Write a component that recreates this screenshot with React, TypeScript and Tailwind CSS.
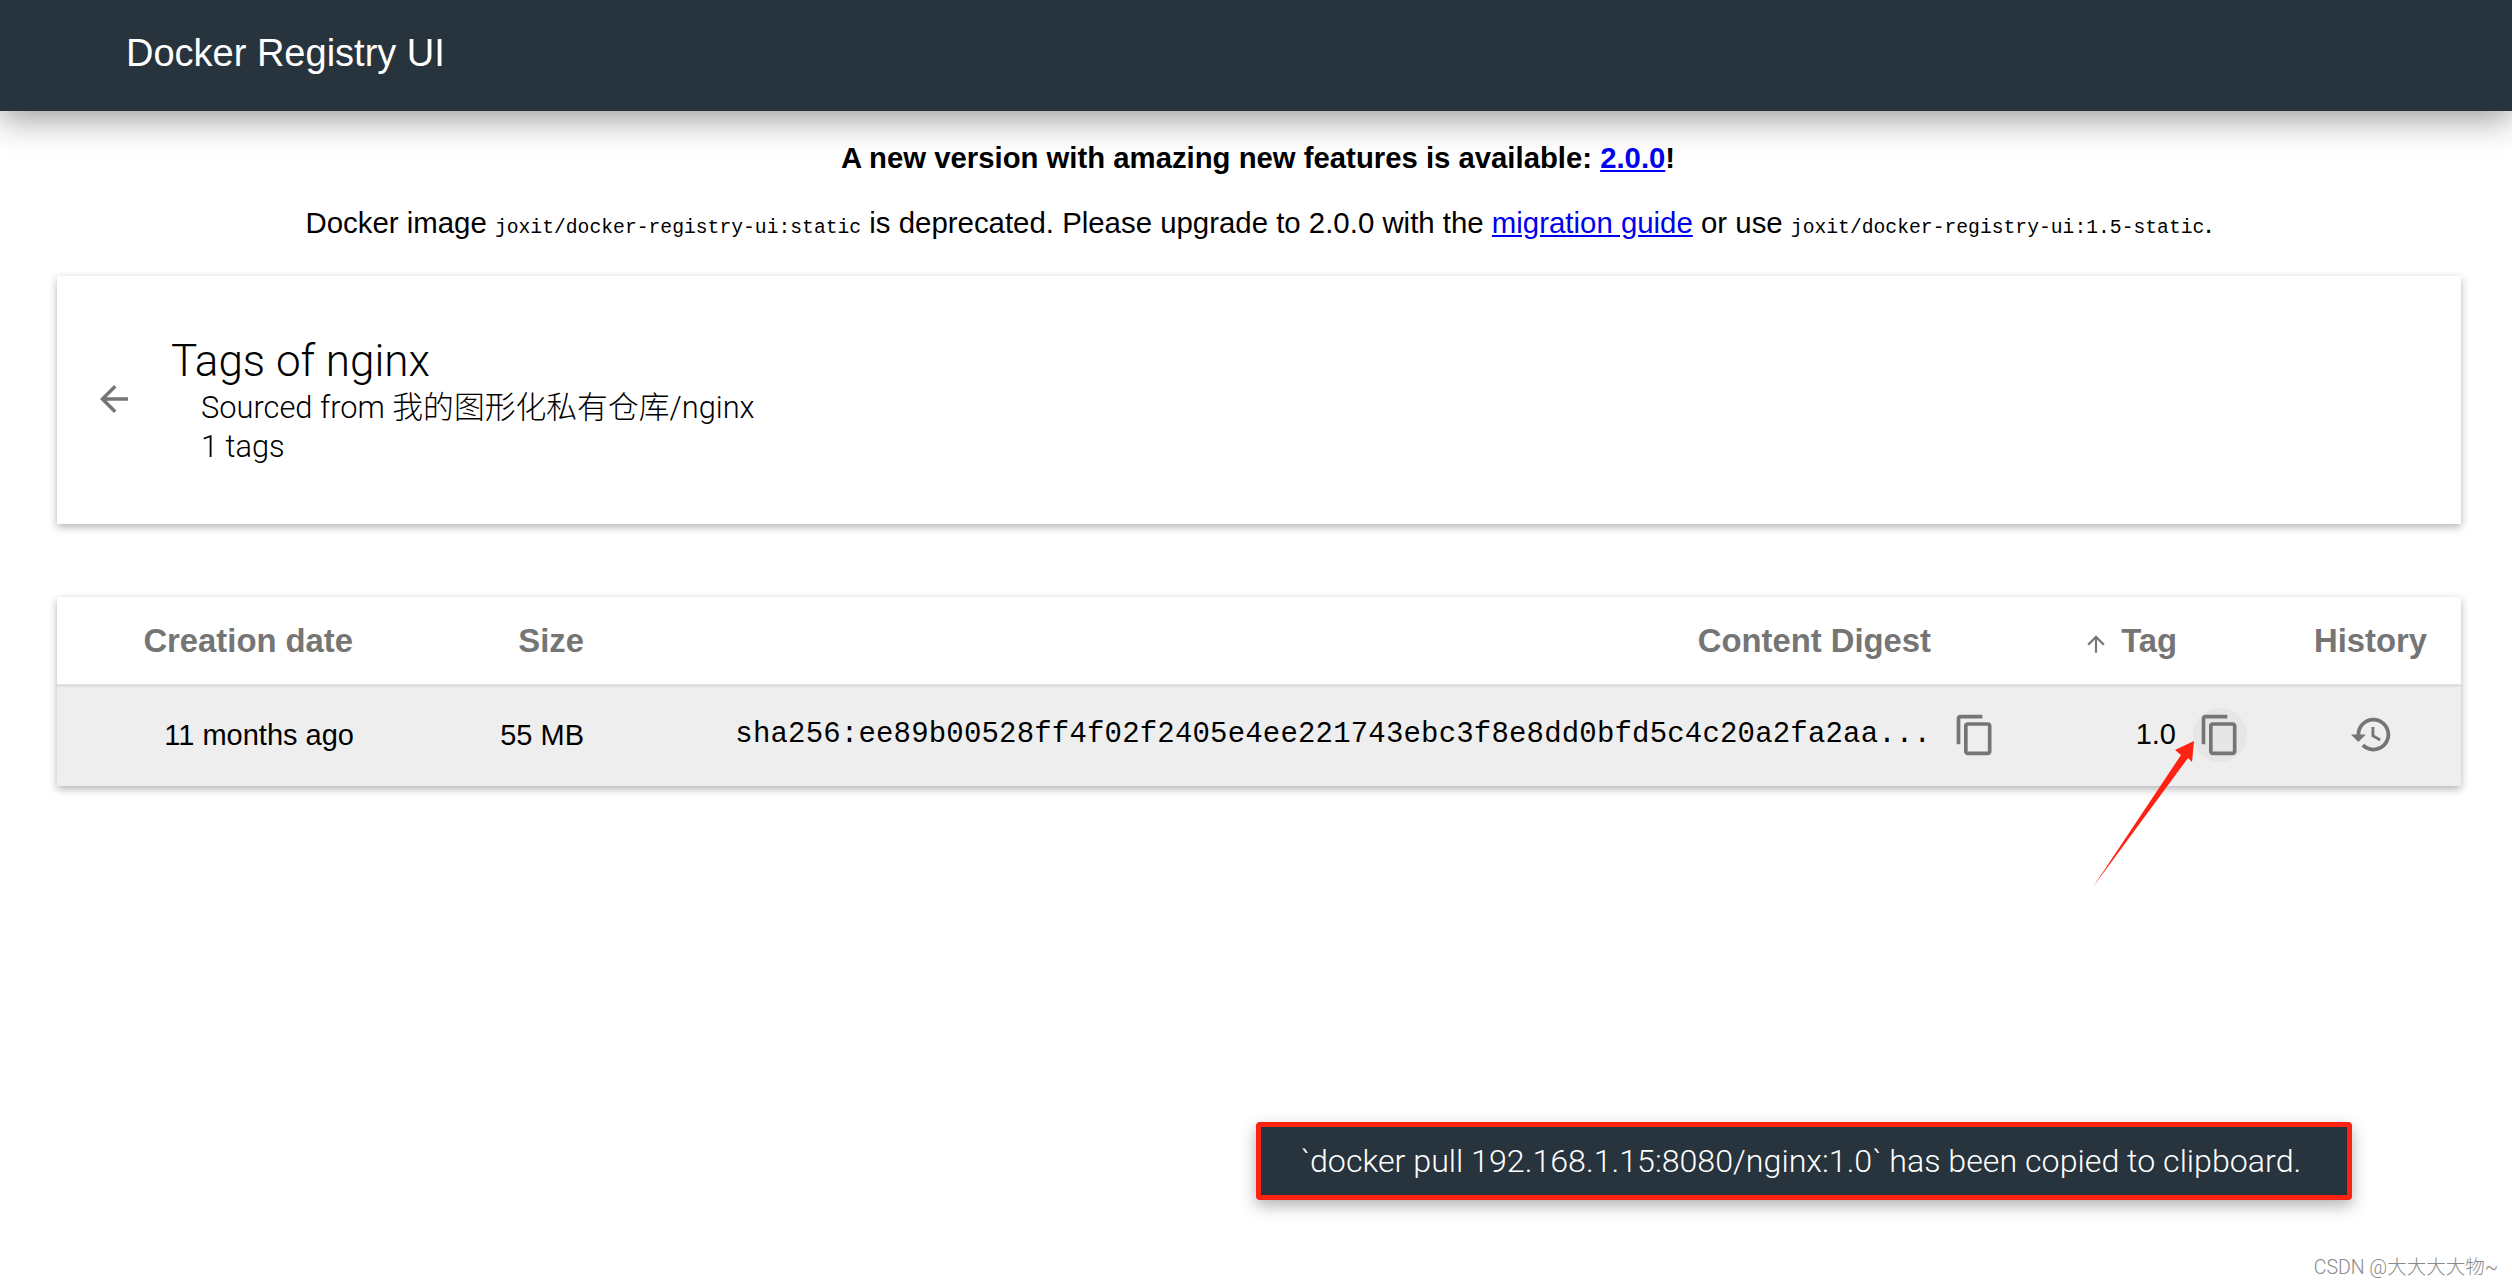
import React from "react";

const copyPath = "M16 1H4c-1.1 0-2 .9-2 2v14h2V3h12V1zm3 4H8c-1.1 0-2 .9-2 2v14c0 1.1.9 2 2 2h11c1.1 0 2-.9 2-2V7c0-1.1-.9-2-2-2zm0 16H8V7h11v14z";
const historyPath = "M13 3c-4.97 0-9 4.03-9 9H1l3.89 3.89.07.14L9 12H6c0-3.87 3.13-7 7-7s7 3.13 7 7-3.13 7-7 7c-1.93 0-3.68-.79-4.94-2.06l-1.42 1.42C8.27 19.99 10.51 21 13 21c4.97 0 9-4.03 9-9s-4.03-9-9-9zm-1 5v5l4.28 2.54.72-1.21-3.5-2.08V8H12z";
const backPath = "M20 11H7.83l5.59-5.59L12 4l-8 8 8 8 1.41-1.41L7.83 13H20v-2z";
const upPath = "M4 12l1.41 1.41L11 7.83V20h2V7.83l5.58 5.59L20 12l-8-8-8 8z";

function Icon({ d, className }: { d: string; className: string }) {
  return (
    <svg viewBox="0 0 24 24" className={className} fill="#757575">
      <path d={d} />
    </svg>
  );
}

const roboto = "font-['Roboto','Noto_Sans_CJK_SC',sans-serif]";
const arial = "font-['Liberation_Sans',sans-serif]";
const th = "text-[32.8px] font-bold text-[#757575] text-right";

export default function App() {
  return (
    <div className="relative h-[1287px] w-[2512px] overflow-hidden bg-white text-black">
      {/* Header */}
      <header className="relative z-10 flex h-[111px] items-center bg-[#27333d] pb-1 pl-[126px] shadow-[0_8px_32px_rgba(0,0,0,0.4)]">
        <span className={`${arial} text-[38px] text-white`}>Docker Registry UI</span>
      </header>

      {/* Banner */}
      <div className={`${arial} mt-[30px] pl-[4px] text-center text-[29.3px] font-bold leading-[34px]`}>
        A new version with amazing new features is available:{" "}
        <a className="text-[#0000ee] underline">2.0.0</a>!
      </div>
      <div className={`${arial} mt-[31px] pl-[6px] text-center text-[29.4px] leading-[34px]`}>
        Docker image <code className="font-['Liberation_Mono',monospace] text-[19.7px]">joxit/docker-registry-ui:static</code> is deprecated. Please upgrade to 2.0.0 with the{" "}
        <a className="text-[#0000ee] underline">migration guide</a> or use{" "}
        <code className="font-['Liberation_Mono',monospace] text-[19.7px]">joxit/docker-registry-ui:1.5-static</code>.
      </div>

      {/* Tags card */}
      <section className="ml-[57px] mr-[51px] mt-[31px] flex h-[248px] items-center bg-white pl-[36px] shadow-[0_3px_8px_rgba(0,0,0,0.3)]">
        <Icon d={backPath} className="mb-[2px] h-[42px] w-[42px]" />
        <div className={`${roboto} ml-[36px] font-light`}>
          <h2 className="text-[44px] font-light leading-[52px]">Tags of nginx</h2>
          <div className="mt-[2px] pl-[30px] text-[30.8px] leading-[38px]">Sourced from 我的图形化私有仓库/nginx</div>
          <div className="mt-[1px] pl-[30px] text-[30.8px] leading-[38px]">1 tags</div>
        </div>
      </section>

      {/* Tags table */}
      <section className="ml-[57px] mr-[51px] mt-[73px] bg-white shadow-[0_3px_8px_rgba(0,0,0,0.3)]">
        <div className={`${arial} grid h-[90px] grid-cols-[320px_231px_1414px_238px_201px] items-center border-b-[3px] border-[#e0e0e0]`}>
          <div className={`${th} pr-[24px]`}>Creation date</div>
          <div className={`${th} pr-[24px]`}>Size</div>
          <div className={`${th} pr-[91px]`}>Content Digest</div>
          <div className={`${th} flex items-center justify-end pr-[83px]`}>
            <Icon d={upPath} className="mr-[12px] mt-[6px] h-[26px] w-[26px]" />
            Tag
          </div>
          <div className={`${th} pr-[34px]`}>History</div>
        </div>
        <div className="grid h-[99px] grid-cols-[320px_231px_1414px_238px_201px] items-center bg-[#eeeeee] pb-[4px]">
          <div className={`${arial} mt-[2px] pr-[23px] text-right text-[29px]`}>11 months ago</div>
          <div className={`${arial} mt-[2px] pr-[24px] text-right text-[29px]`}>55 MB</div>
          <div className="flex items-center justify-end pr-[25px]">
            <span className="mr-[1px] font-['Liberation_Mono',monospace] text-[29px] tracking-[0.18px]">sha256:ee89b00528ff4f02f2405e4ee221743ebc3f8e8dd0bfd5c4c20a2fa2aa...</span>
            <Icon d={copyPath} className="ml-[21px] h-[44px] w-[44px]" />
          </div>
          <div className="flex items-center justify-end pr-[13px]">
            <span className={`${arial} text-[29px]`}>1.0</span>
            <span className="ml-[17px] flex h-[54px] w-[54px] items-center justify-center rounded-full bg-[#e6e6e6]">
              <Icon d={copyPath} className="h-[44px] w-[44px]" />
            </span>
          </div>
          <div className="flex justify-center pl-[21px]">
            <Icon d={historyPath} className="h-[45px] w-[45px]" />
          </div>
        </div>
      </section>

      {/* Red annotation arrow */}
      <svg className="absolute left-[2080px] top-[730px] h-[170px] w-[130px]" viewBox="0 0 130 170">
        <path d="M13 157 L101 25 L95 20 L114 11 L112 32 L108 28 Z" fill="#fe2213" />
      </svg>

      {/* Toast */}
      <div className={`${roboto} absolute left-[1256px] top-[1122px] flex h-[78px] w-[1096px] items-center justify-center rounded-[4px] border-[5px] border-[#fe2213] bg-[#27333d] pr-[6px] text-[32.2px] font-light text-white shadow-[0_6px_16px_rgba(0,0,0,0.3)]`}>
        `docker pull 192.168.1.15:8080/nginx:1.0` has been copied to clipboard.
      </div>

      {/* Watermark */}
      <div className={`${roboto} absolute right-[14px] top-[1253px] text-[19.5px] font-light text-[#8a8a8a]`}>CSDN @大大大大物~</div>
    </div>
  );
}
